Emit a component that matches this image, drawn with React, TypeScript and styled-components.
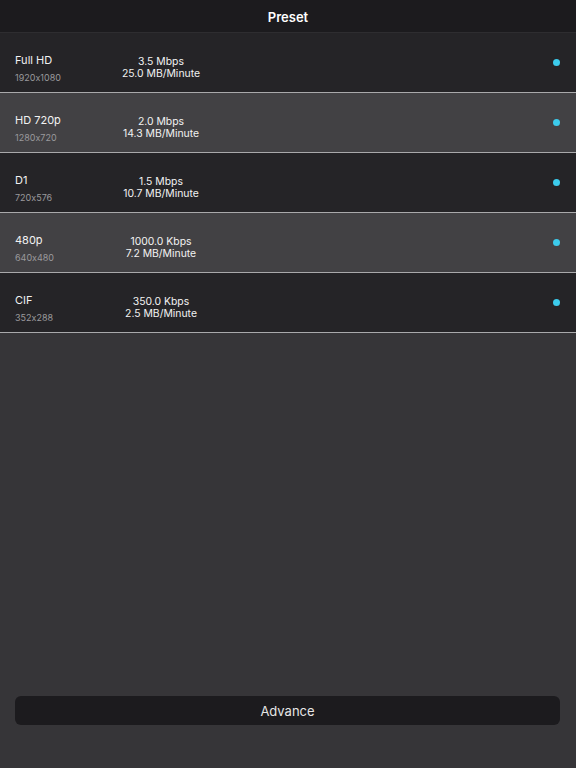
import styled, { createGlobalStyle } from 'styled-components';

const GlobalStyle = createGlobalStyle`
  html, body {
    margin: 0;
    padding: 0;
    background: #363538;
    font-family: Inter, "Liberation Sans", sans-serif;
    font-feature-settings: "calt" 0;
    -webkit-font-smoothing: antialiased;
  }
`;

interface PresetItem {
  name: string;
  size: string;
  bitrate: string;
  perMinute: string;
}

const presets: PresetItem[] = [
  { name: 'Full HD', size: '1920x1080', bitrate: '3.5 Mbps', perMinute: '25.0 MB/Minute' },
  { name: 'HD 720p', size: '1280x720', bitrate: '2.0 Mbps', perMinute: '14.3 MB/Minute' },
  { name: 'D1', size: '720x576', bitrate: '1.5 Mbps', perMinute: '10.7 MB/Minute' },
  { name: '480p', size: '640x480', bitrate: '1000.0 Kbps', perMinute: '7.2 MB/Minute' },
  { name: 'CIF', size: '352x288', bitrate: '350.0 Kbps', perMinute: '2.5 MB/Minute' },
];

const Page = styled.div`
  min-height: 100vh;
  display: flex;
  flex-direction: column;
  background: #363538;
`;

const Header = styled.header`
  height: 32px;
  padding-top: 2px;
  box-sizing: border-box;
  display: flex;
  align-items: center;
  justify-content: center;
  background: #1c1b1e;
  border-bottom: 1px solid #2e2d30;
  color: #fff;
  font-size: 13px;
  font-weight: 600;
  box-sizing: content-box;
  height: 30px;
`;

const List = styled.div`
  display: flex;
  flex-direction: column;
`;

const Row = styled.div<{ $light: boolean }>`
  height: 59px;
  display: grid;
  grid-template-columns: 85px 122px 1fr 7px;
  padding: 0 16px 0 15px;
  background: ${(p) => (p.$light ? '#424144' : '#252427')};
  border-bottom: 1px solid #a9a9ab;
  box-sizing: content-box;
`;

const NameCol = styled.div`
  display: flex;
  flex-direction: column;
  padding-top: 20px;
  row-gap: 4px;
`;

const Name = styled.span`
  font-size: 11px;
  line-height: 14px;
  color: #f2f2f2;
`;

const Size = styled.span`
  font-size: 9px;
  line-height: 14px;
  color: #9a999c;
`;

const RateCol = styled.div`
  display: flex;
  flex-direction: column;
  align-items: center;
  padding-top: 23px;
  font-size: 10.4px;
  line-height: 12px;
  color: #f2f2f2;
  white-space: nowrap;
`;

const Dot = styled.span`
  align-self: center;
  grid-column: 4;
  width: 7px;
  height: 7px;
  border-radius: 50%;
  background: #3ccbec;
`;

const Spacer = styled.div`
  flex: 1;
`;

const AdvanceButton = styled.button`
  margin: 0 16px 43px 15px;
  height: 29px;
  border: none;
  border-radius: 6px;
  background: #1c1b1e;
  color: #e6e6e6;
  font-family: inherit;
  font-size: 13px;
`;

export default function App() {
  return (
    <>
      <GlobalStyle />
      <Page>
        <Header>Preset</Header>
        <List>
          {presets.map((p, i) => (
            <Row key={p.name} $light={i % 2 === 1}>
              <NameCol>
                <Name>{p.name}</Name>
                <Size>{p.size}</Size>
              </NameCol>
              <RateCol>
                <span>{p.bitrate}</span>
                <span>{p.perMinute}</span>
              </RateCol>
              <Dot />
            </Row>
          ))}
        </List>
        <Spacer />
        <AdvanceButton>Advance</AdvanceButton>
      </Page>
    </>
  );
}
